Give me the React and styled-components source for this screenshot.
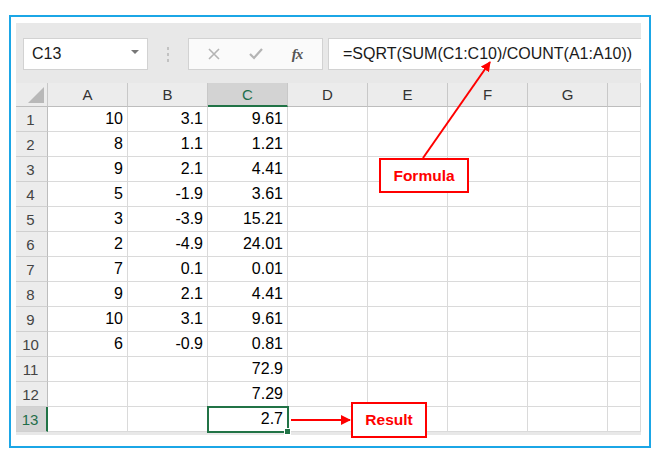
import React from "react";
import styled, { createGlobalStyle } from "styled-components";

const GlobalStyle = createGlobalStyle`
  html, body {
    margin: 0;
    padding: 0;
    background: #ffffff;
  }
  * {
    box-sizing: border-box;
  }
`;

const columns = ["A", "B", "C", "D", "E", "F", "G"];

const rows = [
  ["10", "3.1", "9.61"],
  ["8", "1.1", "1.21"],
  ["9", "2.1", "4.41"],
  ["5", "-1.9", "3.61"],
  ["3", "-3.9", "15.21"],
  ["2", "-4.9", "24.01"],
  ["7", "0.1", "0.01"],
  ["9", "2.1", "4.41"],
  ["10", "3.1", "9.61"],
  ["6", "-0.9", "0.81"],
  ["", "", "72.9"],
  ["", "", "7.29"],
  ["", "", "2.7"],
];

const Page = styled.div`
  position: relative;
  width: 658px;
  height: 457px;
  padding: 15px 0 0 9px;
  font-family: "Liberation Sans", Arial, sans-serif;
`;

const Frame = styled.div`
  width: 642px;
  height: 433px;
  border: 2px solid #1ba6e6;
  padding: 6px 8px 0 5px;
`;

const Window = styled.div`
  background: #e8e8e8;
  padding-bottom: 3px;
`;

const Toolbar = styled.div`
  height: 60px;
  display: flex;
  align-items: center;
  padding: 2px 0 0 7px;
`;

const NameBox = styled.div`
  width: 125px;
  height: 32px;
  background: #fff;
  border: 1px solid #d2d2d2;
  display: flex;
  align-items: center;
  justify-content: space-between;
  padding: 0 8px 0 8px;
  font-size: 16px;
  color: #1a1a1a;
`;

const DropArrow = styled.span`
  width: 0;
  height: 0;
  border-left: 4px solid transparent;
  border-right: 4px solid transparent;
  border-top: 4px solid #777;
  margin-top: -4px;
`;

const Dots = styled.div`
  width: 40px;
  display: flex;
  flex-direction: column;
  align-items: center;
  gap: 3px;
  & > span {
    width: 2px;
    height: 3px;
    background: #c2c2c2;
  }
`;

const ButtonsBox = styled.div`
  width: 135px;
  height: 32px;
  background: #fafafa;
  border: 1px solid #d2d2d2;
  display: flex;
  align-items: center;
  justify-content: space-around;
  padding: 0 6px 0 4px;
`;

const Fx = styled.span`
  font-family: "Liberation Serif", "Times New Roman", serif;
  font-style: italic;
  font-weight: bold;
  font-size: 15px;
  color: #555;
  letter-spacing: -1px;
`;

const FormulaBar = styled.div`
  flex: 1;
  height: 32px;
  margin-left: 5px;
  background: #fff;
  border: 1px solid #d2d2d2;
  border-right: none;
  display: flex;
  align-items: center;
  padding-left: 14px;
  font-size: 16px;
  color: #1a1a1a;
  white-space: nowrap;
`;

const Grid = styled.div`
  display: grid;
  grid-template-columns: 32px repeat(7, 80px) 1fr;
  grid-template-rows: 24px repeat(13, 25px);
  background: #fff;
`;

const Corner = styled.div`
  background: #ececec;
  border-right: 1px solid #c8c8c8;
  border-bottom: 1px solid #bdbdbd;
  position: relative;
  &::after {
    content: "";
    position: absolute;
    right: 3px;
    bottom: 3px;
    width: 0;
    height: 0;
    border-left: 16px solid transparent;
    border-bottom: 16px solid #b8b8b8;
  }
`;

const ColHeader = styled.div`
  background: ${(p) => (p.$selected ? "#d3d3d3" : "#ececec")};
  border-right: 1px solid #c8c8c8;
  border-bottom: ${(p) => (p.$selected ? "2px solid #217346" : "1px solid #bdbdbd")};
  display: flex;
  align-items: center;
  justify-content: center;
  font-size: 15px;
  color: ${(p) => (p.$selected ? "#1f6e4a" : "#333")};
`;

const RowHeader = styled.div`
  background: ${(p) => (p.$selected ? "#d3d3d3" : "#ececec")};
  border-right: ${(p) => (p.$selected ? "2px solid #217346" : "1px solid #bdbdbd")};
  border-bottom: 1px solid #d0d0d0;
  display: flex;
  align-items: center;
  justify-content: center;
  padding-right: 2px;
  font-size: 15px;
  color: ${(p) => (p.$selected ? "#1f6e4a" : "#444")};
`;

const Cell = styled.div`
  position: relative;
  border-right: 1px solid #dadada;
  border-bottom: 1px solid #dadada;
  display: flex;
  align-items: center;
  justify-content: flex-end;
  padding-right: 4px;
  font-size: 16px;
  color: #000;
  ${(p) =>
    p.$active &&
    `
    outline: 2px solid #217346;
    outline-offset: -1px;
    z-index: 1;
  `}
`;

const FillHandle = styled.span`
  position: absolute;
  right: -4px;
  bottom: -4px;
  width: 7px;
  height: 7px;
  background: #217346;
  border: 1px solid #fff;
`;

const Callout = styled.div`
  position: absolute;
  left: ${(p) => p.$x}px;
  top: ${(p) => p.$y}px;
  width: ${(p) => p.$w}px;
  height: ${(p) => p.$h}px;
  border: 2px solid #ff0000;
  background: #fff;
  display: flex;
  align-items: center;
  justify-content: center;
  color: #ff0000;
  font-weight: bold;
  font-size: 15.5px;
`;

const Arrows = styled.svg`
  position: absolute;
  left: 0;
  top: 0;
  pointer-events: none;
`;

function XIcon() {
  return (
    <svg width="14" height="14" viewBox="0 0 14 14">
      <path d="M2 2 L12 12 M12 2 L2 12" stroke="#b4b4b4" strokeWidth="1.6" />
    </svg>
  );
}

function CheckIcon() {
  return (
    <svg width="16" height="14" viewBox="0 0 16 14">
      <path d="M2 7 L6 11 L14 2" stroke="#b4b4b4" strokeWidth="2.2" fill="none" />
    </svg>
  );
}

export default function App() {
  return (
    <Page>
      <GlobalStyle />
      <Frame>
        <Window>
          <Toolbar>
            <NameBox>
              C13
              <DropArrow />
            </NameBox>
            <Dots>
              <span />
              <span />
              <span />
            </Dots>
            <ButtonsBox>
              <XIcon />
              <CheckIcon />
              <Fx>fx</Fx>
            </ButtonsBox>
            <FormulaBar>=SQRT(SUM(C1:C10)/COUNT(A1:A10))</FormulaBar>
          </Toolbar>
          <Grid>
            <Corner />
            {columns.map((c) => (
              <ColHeader key={c} $selected={c === "C"}>
                {c}
              </ColHeader>
            ))}
            <ColHeader />
            {rows.map((r, i) => (
              <React.Fragment key={i}>
                <RowHeader $selected={i === 12}>{i + 1}</RowHeader>
                {columns.map((c, j) => (
                  <Cell key={c} $active={i === 12 && j === 2}>
                    {r[j] || ""}
                    {i === 12 && j === 2 && <FillHandle />}
                  </Cell>
                ))}
                <Cell />
              </React.Fragment>
            ))}
          </Grid>
        </Window>
      </Frame>

      <Arrows width="658" height="457" viewBox="0 0 658 457">
        <defs>
          <marker
            id="head"
            markerWidth="10"
            markerHeight="10"
            refX="9"
            refY="5"
            orient="auto"
            markerUnits="userSpaceOnUse"
          >
            <path d="M0 0 L10 5 L0 10 Z" fill="#ff0000" />
          </marker>
        </defs>
        <line x1="423" y1="158" x2="490" y2="62" stroke="#ff0000" strokeWidth="2" markerEnd="url(#head)" />
        <line x1="291" y1="420" x2="350" y2="420" stroke="#ff0000" strokeWidth="2" markerEnd="url(#head)" />
      </Arrows>
      <Callout $x={379} $y={158} $w={90} $h={35}>
        Formula
      </Callout>
      <Callout $x={351} $y={402} $w={76} $h={36}>
        Result
      </Callout>
    </Page>
  );
}
